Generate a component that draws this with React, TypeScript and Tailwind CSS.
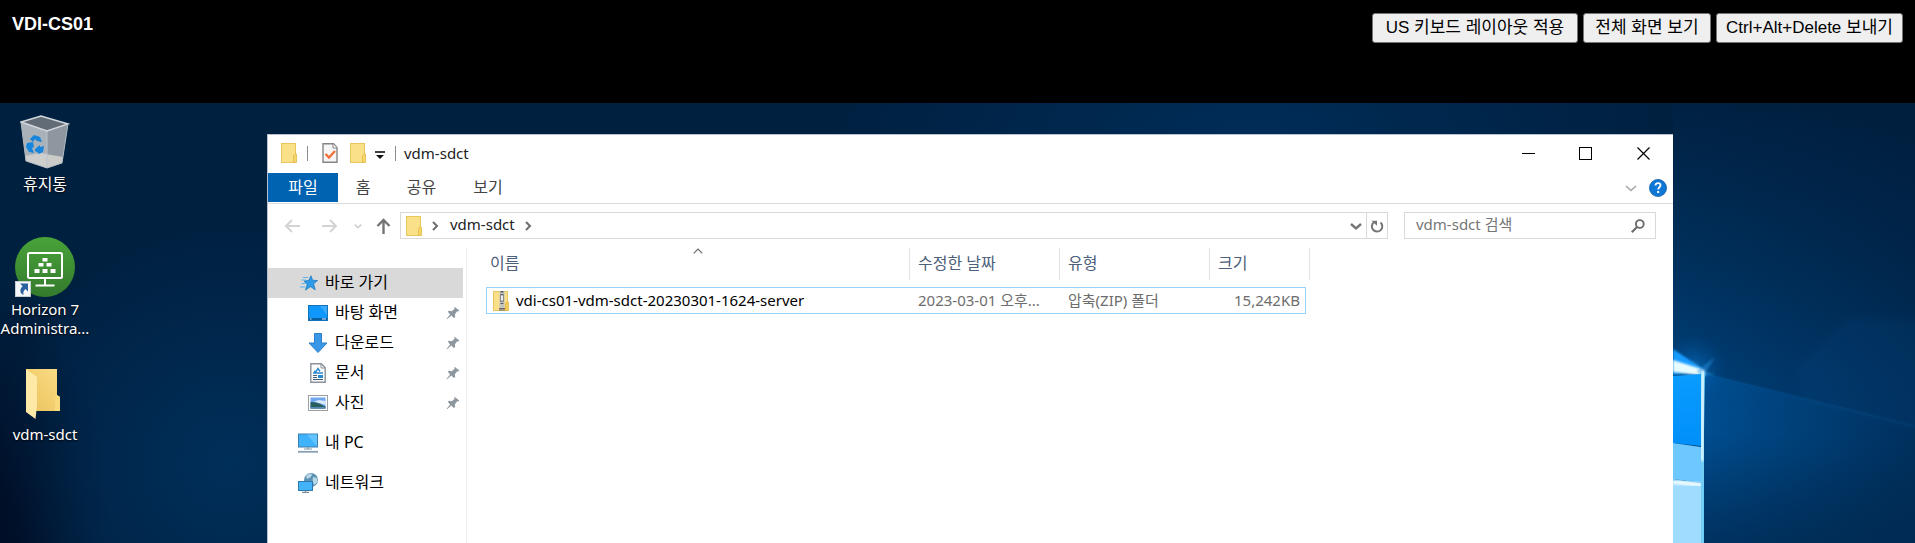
import type { ReactNode } from "react";

const UI = "font-['Noto_Sans','Noto_Sans_CJK_KR',sans-serif]";

function FolderIcon() {
  return (
    <svg width="16" height="20" viewBox="0 0 16 20" className="shrink-0" aria-hidden="true">
      <rect x="0.5" y="0.5" width="14" height="19" fill="#fbe08a" stroke="#e9c65c" />
      <path d="M12.5 19.5v-7l1.5-1.5h1.5v8.5z" fill="#f7d567" stroke="#dfb94a" strokeWidth="0.8" />
    </svg>
  );
}

function ZipIcon() {
  return (
    <svg width="16" height="20" viewBox="0 0 16 20" className="shrink-0" aria-hidden="true">
      <rect x="0.5" y="0.5" width="14" height="19" fill="#fbe08a" stroke="#e9c65c" />
      <path d="M12.5 19.5v-7l1.5-1.5h1.5v8.5z" fill="#f2cc55" stroke="#dfb94a" strokeWidth="0.8" />
      <rect x="6.5" y="0" width="5" height="19.5" fill="#c4c4be" />
      <path d="M9 0v13" stroke="#5b5b5b" strokeWidth="3" strokeDasharray="1.5 1.5" />
      <rect x="7.5" y="4" width="3" height="6" fill="#ececec" stroke="#7b7b7b" strokeWidth="0.8" />
      <path d="M6 17.5h6M6 19h6" stroke="#6d6a55" strokeWidth="1" />
    </svg>
  );
}

function PropertiesIcon() {
  return (
    <svg width="16" height="20" viewBox="0 0 16 20" aria-hidden="true">
      <path d="M1 .8h10.5L15 4.5V19.2H1z" fill="#f6f6f6" stroke="#858585" strokeWidth="1.4" />
      <path d="M11 1v4h4" fill="#fff" stroke="#858585" />
      <path d="M3.5 11l3.5 3.5 6-6.5" fill="none" stroke="#f1703a" strokeWidth="2.4" />
    </svg>
  );
}

function RecycleBinIcon() {
  return (
    <svg width="50" height="54" viewBox="0 0 50 54" aria-hidden="true">
      <path d="M1 7L27 16v37L6 46z" fill="#a9b1b9" />
      <path d="M48 9L27 16v37l15-5z" fill="#8e979f" />
      <path d="M1 7L21 1l27 8-21 7z" fill="#626c77" />
      <path d="M6 46l-1-5 15-3 23 4-1 6-15 5z" fill="#d2d1ce" opacity=".9" />
      <path d="M27 16v37" stroke="#bcc3c9" />
      <path d="M1 7L21 1l27 8-21 7z" fill="none" stroke="#d3d8dc" strokeWidth="1.4" />
      <path d="M1 7l5 39 21 7 15-5 6-39" fill="none" stroke="#b3bac1" strokeWidth="1" />
      <g fill="#1785dc">
        <path d="M10 24l4-4 6 2 2 5-5-1-2-2-2 3z" />
        <path d="M7 28l6-1 1 5-2 1 2 5-5-1-3-5z" />
        <path d="M15 34l5-4v2l4-1-1 6-4 2-2-2-2-1z" />
      </g>
    </svg>
  );
}

function HorizonIcon() {
  return (
    <svg width="62" height="62" viewBox="0 0 62 62" aria-hidden="true">
      <defs>
        <linearGradient id="horizon" x1="0" y1="0" x2="0" y2="1">
          <stop offset="0" stopColor="#48a339" />
          <stop offset="1" stopColor="#347a2d" />
        </linearGradient>
      </defs>
      <circle cx="31" cy="31" r="30" fill="url(#horizon)" />
      <rect x="14" y="17" width="34" height="25" rx="1.5" fill="none" stroke="#fff" strokeWidth="2" />
      <path d="M31 42v7M21.500 49.500h19" stroke="#fff" strokeWidth="2" fill="none" />
      <g fill="#fff">
        <rect x="28.500" y="22" width="5" height="3.500" />
        <rect x="24.500" y="27" width="5" height="3.500" />
        <rect x="32.500" y="27" width="5" height="3.500" />
        <rect x="20.500" y="33" width="5" height="4" />
        <rect x="28.500" y="33" width="5" height="4" />
        <rect x="36.500" y="33" width="5" height="4" />
      </g>
      <rect x="1.500" y="45.500" width="15" height="15" fill="#f4f6f8" stroke="#c9ced4" />
      <path d="M6 47.500h8v8l-2.500-2.500c-2 1.500-2.500 3-2 6-4-2-4-6-.8-8.800z" fill="#2c5f9e" />
    </svg>
  );
}

function OpenFolderIcon() {
  return (
    <svg width="40" height="52" viewBox="0 0 40 52" aria-hidden="true">
      <defs>
        <linearGradient id="folderBack" x1="0" y1="1" x2="1" y2="0">
          <stop offset="0" stopColor="#eac25a" />
          <stop offset="1" stopColor="#fbdc86" />
        </linearGradient>
      </defs>
      <path d="M1 1h31v26l3 2v14H1z" fill="url(#folderBack)" />
      <path d="M32 27l3 2v14h-5V30z" fill="#f8d97c" />
      <path d="M1 1l11 8v28l-1.500 14L1 44z" fill="#ffe9a6" />
    </svg>
  );
}

function PinIcon() {
  return (
    <svg width="14" height="14" viewBox="0 0 14 14" aria-hidden="true">
      <path d="M8.500 .8l4.800 3.600-1 1.200-1.100-.3-2.300 3 .3 2.600-1.300 1L5.300 9.600 1 13.200.6 12.800l3.500-4.400L1.800 5.800l1.200-1 2.700.4 3-2.500-.4-.9z" fill="#8d979f" />
    </svg>
  );
}

function StarIcon() {
  return (
    <svg width="18" height="16" viewBox="0 0 18 16" aria-hidden="true">
      <path d="M11 .8l1.500 4.400 5 .4-3.900 3.200 1.600 6-4.700-3.200L5.500 15l1.700-5.400L4 6l4.700-.4z" fill="#2d9be8" stroke="#1b79c4" strokeWidth=".8" />
      <path d="M3 2.500h5M1.500 5h4M1.500 8.500h4M0 12h5" stroke="#5fb3ea" strokeWidth="1.200" />
    </svg>
  );
}

function DesktopIcon() {
  return (
    <svg width="20" height="16" viewBox="0 0 20 16" aria-hidden="true">
      <rect x=".5" y=".5" width="19" height="15" fill="#0f97fb" stroke="#1373b8" />
      <path d="M12 1h7v9z" fill="#38abff" />
      <path d="M1 14h18" stroke="#0b5f9e" strokeWidth="2" />
      <path d="M2 14h1.500M14 14h4" stroke="#d4ecff" strokeWidth="1" />
    </svg>
  );
}

function DownloadIcon() {
  return (
    <svg width="20" height="20" viewBox="0 0 20 20" aria-hidden="true">
      <path d="M6.500.5h7v9.500h5.500L10 19.500 1 10h5.500z" fill="#3a97e6" stroke="#2c7fcb" />
    </svg>
  );
}

function DocumentIcon() {
  return (
    <svg width="16" height="20" viewBox="0 0 16 20" aria-hidden="true">
      <path d="M.8.8h10.500l3.900 4v14.400H.8z" fill="#fbfbfb" stroke="#8b9299" strokeWidth="1.400" />
      <path d="M11 1v4h4" fill="none" stroke="#8b9299" />
      <path d="M4 8.500h2l2-3 2 3M3 10h10" stroke="#2a8ad0" fill="none" strokeWidth="1.400" />
      <rect x="8" y="12" width="5" height="3" fill="#2a8ad0" />
      <path d="M3 12.500h4M3 14.500h4M3 16.500h10" stroke="#3e5e7a" />
    </svg>
  );
}

function PictureIcon() {
  return (
    <svg width="20" height="16" viewBox="0 0 20 16" aria-hidden="true">
      <rect x=".5" y=".5" width="19" height="15" fill="#fff" stroke="#9aa0a6" />
      <rect x="2.500" y="2.500" width="15" height="11" fill="#6fa6ee" />
      <path d="M6 6.500l5-1.500 6.500 1V10z" fill="#d7e8fb" />
      <path d="M2.500 7c4 0 7 .5 15 4.500v2h-15z" fill="#28605e" />
      <path d="M2.500 12h15v1.500h-15z" fill="#5588b3" />
    </svg>
  );
}

function ComputerIcon() {
  return (
    <svg width="20" height="20" viewBox="0 0 20 20" aria-hidden="true">
      <rect x=".5" y="1" width="19" height="13" fill="#3fb2fb" stroke="#3a7fae" />
      <path d="M9 1.500h10v12z" fill="#62c4ff" />
      <path d="M6 16h8M10 14v2" stroke="#8295a5" strokeWidth="1.200" />
      <path d="M0 18.800h20" stroke="#8aa0b3" strokeWidth="1.800" />
    </svg>
  );
}

function NetworkIcon() {
  return (
    <svg width="20" height="20" viewBox="0 0 20 20" aria-hidden="true">
      <circle cx="13" cy="7" r="7" fill="#5c93b4" />
      <path d="M8 3c2-2 4-2.500 6-2l-1 3-4 2zM15 4l4 1 .5 4-3 3-2-3z" fill="#b6d7e6" />
      <rect x=".5" y="8.500" width="14" height="9" fill="#43b3f9" stroke="#2f78ab" />
      <path d="M7.500 17.500v2M4 19.400h7" stroke="#7d909f" strokeWidth="1.200" />
    </svg>
  );
}

function Chevron({ d, size, color, width = 2 }: { d: string; size: number; color: string; width?: number }) {
  return (
    <svg width={size} height={size} viewBox="0 0 12 12" aria-hidden="true">
      <path d={d} fill="none" stroke={color} strokeWidth={width} />
    </svg>
  );
}

const DOWN = "M1 4l5 4.500 5-4.500";
const RIGHT = "M3 2l4 4-4 4";

function DesktopItem({ icon, label, className }: { icon: ReactNode; label: ReactNode; className: string }) {
  return (
    <button type="button" className={`flex w-[90px] flex-col items-center text-center text-white ${className}`}>
      {icon}
      <span className="whitespace-nowrap [text-shadow:0_1px_2px_#000]">{label}</span>
    </button>
  );
}

function NavItem({ icon, label, root, className = "" }: { icon: ReactNode; label: string; root?: boolean; className?: string }) {
  return (
    <li className={className}>
      <a href="#" className={`flex h-[30px] items-center pr-[3px] text-[16px] text-black ${root ? "pl-[30px]" : "pl-[40px]"}`}>
        <span className="flex w-5 justify-center">{icon}</span>
        <span className="ml-[7px] flex-1 pb-[2px]">{label}</span>
        {!root && <PinIcon />}
      </a>
    </li>
  );
}

function HeaderCell({ label, width, sorted, last }: { label: string; width: string; sorted?: boolean; last?: boolean }) {
  return (
    <th className={`p-0 pb-[7px] font-normal ${width}`}>
      <div className={`relative flex h-8 items-center border-r border-[#e2e2e2] pb-[2px] text-[16px] text-[#4c607a] ${sorted ? "pl-[4px]" : "pl-[8px]"} ${last ? "-mr-1" : ""}`}>
        {label}
        {sorted && (
          <span className="absolute top-0 left-1/2 -translate-x-1/2">
            <svg width="10" height="6" viewBox="0 0 10 6" aria-hidden="true">
              <path d="M.7 5.300L5 1l4.300 4.300" fill="none" stroke="#6b6b6b" strokeWidth="1.200" />
            </svg>
          </span>
        )}
      </div>
    </th>
  );
}

function Explorer() {
  return (
    <section className="mt-[31px] flex min-w-0 flex-1 flex-col border-t border-l border-[#b7c0cc] bg-white text-[15px]">
      <header className="flex h-[38px] items-center pb-[2px] pl-[13px]">
        <FolderIcon />
        <span className="ml-[10px] h-[15px] w-px bg-[#8c8c8c]" />
        <button type="button" aria-label="속성" className="ml-[14px]"><PropertiesIcon /></button>
        <button type="button" aria-label="새 폴더" className="ml-[12px]"><FolderIcon /></button>
        <button type="button" aria-label="빠른 실행 도구 모음 사용자 지정" className="ml-[9px] pt-[3px]">
          <svg width="10" height="10" viewBox="0 0 10 10" aria-hidden="true">
            <path d="M0 2h10" stroke="#111" strokeWidth="1.600" />
            <path d="M1 5h8L5 9z" fill="#111" />
          </svg>
        </button>
        <span className="ml-[10px] h-[15px] w-px bg-[#8c8c8c]" />
        <h2 className="ml-[8px] text-[#222]">vdm-sdct</h2>
        <div className="ml-auto flex items-center">
          <button type="button" aria-label="최소화" className="flex w-[57px] justify-center">
            <svg width="13" height="13" viewBox="0 0 13 13"><path d="M0 6.500h13" stroke="#000" /></svg>
          </button>
          <button type="button" aria-label="최대화" className="flex w-[57px] justify-center">
            <svg width="13" height="13" viewBox="0 0 13 13"><rect x=".5" y=".5" width="12" height="12" fill="none" stroke="#000" /></svg>
          </button>
          <button type="button" aria-label="닫기" className="flex w-[59px] justify-center">
            <svg width="13" height="13" viewBox="0 0 13 13"><path d="M.5.5l12 12M12.500.5l-12 12" stroke="#000" strokeWidth="1.200" /></svg>
          </button>
        </div>
      </header>

      <nav className="flex h-[31px] items-start border-b border-[#dadbdc] text-[16px] text-[#444]">
        <button type="button" className="h-[29px] w-[70px] bg-[#0063b1] pb-[2px] text-white">파일</button>
        <button type="button" className="h-[29px] w-[50px] pb-[2px]">홈</button>
        <button type="button" className="h-[29px] w-[67px] pb-[2px]">공유</button>
        <button type="button" className="h-[29px] w-[66px] pb-[2px]">보기</button>
        <div className="ml-auto flex h-[30px] items-center gap-[12px] pr-[6px]">
          <button type="button" aria-label="리본 확장"><Chevron d={DOWN} size={12} color="#a6a6a6" width={1.6} /></button>
          <button type="button" aria-label="도움말">
            <svg width="18" height="18" viewBox="0 0 18 18" aria-hidden="true">
              <circle cx="9" cy="9" r="8.500" fill="#0f78d6" stroke="#0a5ba8" strokeWidth=".8" />
              <path d="M6.500 6.500c0-3.200 5-3 5-.2 0 1.900-2.300 2-2.300 4.200" fill="none" stroke="#fff" strokeWidth="1.800" />
              <rect x="8.200" y="12" width="2" height="2" fill="#fff" />
            </svg>
          </button>
        </div>
      </nav>

      <div className="flex items-center pt-[8px] pr-[17px] pl-[16px]">
        <button type="button" aria-label="뒤로">
          <svg width="16" height="14" viewBox="0 0 16 14"><path d="M16 7H2M8 1L2 7l6 6" fill="none" stroke="#d3d3d3" strokeWidth="2" /></svg>
        </button>
        <button type="button" aria-label="앞으로" className="ml-[22px]">
          <svg width="16" height="14" viewBox="0 0 16 14"><path d="M0 7h14M8 1l6 6-6 6" fill="none" stroke="#d3d3d3" strokeWidth="2" /></svg>
        </button>
        <button type="button" aria-label="최근 위치" className="ml-[16px]"><Chevron d={DOWN} size={8} color="#d0d0d0" width={2.4} /></button>
        <button type="button" aria-label="위로" className="ml-[14px]">
          <svg width="15" height="16" viewBox="0 0 15 16"><path d="M7.500 16V2M1.500 8l6-6 6 6" fill="none" stroke="#757575" strokeWidth="2.400" /></svg>
        </button>
        <div className="ml-[9px] flex h-[27px] min-w-0 flex-1 items-center border border-[#d9d9d9] pl-[5px] text-[#222]">
          <FolderIcon />
          <span className="ml-[8px] flex"><Chevron d={RIGHT} size={12} color="#6d6d6d" /></span>
          <a href="#" className="ml-[8px] pb-[2px]">vdm-sdct</a>
          <span className="ml-[8px] flex"><Chevron d={RIGHT} size={12} color="#6d6d6d" /></span>
          <button type="button" aria-label="이전 위치" className="mr-[4px] ml-auto"><Chevron d={DOWN} size={12} color="#757575" width={2.4} /></button>
          <button type="button" aria-label="새로 고침" className="flex h-full w-[21px] items-center justify-center border-l border-[#d9d9d9]">
            <svg width="14" height="14" viewBox="0 0 14 14">
              <path d="M4 3.200A5.200 5.200 0 1 0 10.500 3.500" fill="none" stroke="#757575" strokeWidth="2" />
              <path d="M1.500 1.800h5.500v5z" fill="#757575" />
            </svg>
          </button>
        </div>
        <form className="ml-[16px] flex h-[27px] w-[252px] items-center border border-[#d9d9d9] pr-[10px] pl-[11px]">
          <input aria-label="vdm-sdct 검색" placeholder="vdm-sdct 검색" className="min-w-0 flex-1 bg-transparent pb-[2px] outline-none placeholder:text-[#767676]" />
          <svg width="14" height="14" viewBox="0 0 14 14" aria-hidden="true">
            <circle cx="8.800" cy="5" r="3.900" fill="none" stroke="#6d6d6d" strokeWidth="1.900" />
            <path d="M6 8L.8 13.200" stroke="#6d6d6d" strokeWidth="2.200" />
          </svg>
        </form>
      </div>

      <div className="mt-[9px] flex flex-1">
        <aside className="w-[199px] shrink-0 border-r border-[#f0f0f0] pt-[20px] pr-[3px]">
          <ul>
            <li className="bg-[#d9d9d9]">
              <a href="#" className="flex h-[30px] items-center pl-[32px] text-[16px] text-black">
                <StarIcon />
                <span className="ml-[7px] pb-[2px]">바로 가기</span>
              </a>
            </li>
            <NavItem icon={<DesktopIcon />} label="바탕 화면" />
            <NavItem icon={<DownloadIcon />} label="다운로드" />
            <NavItem icon={<DocumentIcon />} label="문서" />
            <NavItem icon={<PictureIcon />} label="사진" />
            <NavItem root icon={<ComputerIcon />} label="내 PC" className="mt-[10px]" />
            <NavItem root icon={<NetworkIcon />} label="네트워크" className="mt-[10px]" />
          </ul>
        </aside>
        <div className="min-w-0 flex-1 pl-[19px]">
          <table className="w-[820px] table-fixed border-separate border-spacing-0 text-left">
            <thead>
              <tr>
                <HeaderCell label="이름" width="w-[424px]" sorted />
                <HeaderCell label="수정한 날짜" width="w-[150px]" />
                <HeaderCell label="유형" width="w-[150px]" />
                <HeaderCell label="크기" width="w-[96px]" last />
              </tr>
            </thead>
            <tbody>
              <tr className="text-[#6d6d6d]">
                <td className="h-[27px] border-y border-l border-[#99d1ff] p-0 pl-[6px] text-black">
                  <span className="flex items-center gap-[7px] leading-[20px]">
                    <ZipIcon />
                    <span className="pb-[2px]">vdi-cs01-vdm-sdct-20230301-1624-server</span>
                  </span>
                </td>
                <td className="border-y border-[#99d1ff] p-0 pb-[2px] pl-[8px] leading-[20px] whitespace-nowrap">2023-03-01 오후...</td>
                <td className="border-y border-[#99d1ff] p-0 pb-[2px] pl-[8px] leading-[20px] whitespace-nowrap">압축(ZIP) 폴더</td>
                <td className="border-y border-r border-[#99d1ff] p-0 pr-[5px] pb-[2px] text-right leading-[20px]">15,242KB</td>
              </tr>
            </tbody>
          </table>
        </div>
      </div>
    </section>
  );
}

function LightBeam() {
  return (
    <svg className="h-full w-full" viewBox="0 0 242 440" preserveAspectRatio="xMinYMin slice" aria-hidden="true">
      <defs>
        <linearGradient id="sky" x1="0" y1="0" x2="0" y2="1">
          <stop offset="0" stopColor="#002142" />
          <stop offset=".35" stopColor="#00305c" />
          <stop offset=".62" stopColor="#003f77" />
          <stop offset=".8" stopColor="#00427d" />
          <stop offset="1" stopColor="#003260" />
        </linearGradient>
        <linearGradient id="shade" x1="0" y1="0" x2="1" y2="0">
          <stop offset="0" stopColor="#001a38" stopOpacity="0" />
          <stop offset="1" stopColor="#001a38" stopOpacity=".5" />
        </linearGradient>
        <linearGradient id="beam" x1="0" y1="0" x2="1" y2=".2">
          <stop offset="0" stopColor="#005aa6" stopOpacity=".6" />
          <stop offset="1" stopColor="#004680" stopOpacity=".1" />
        </linearGradient>
        <linearGradient id="fade" x1="0" y1="0" x2="0" y2="1">
          <stop offset="0" stopColor="#002b54" stopOpacity="0" />
          <stop offset="1" stopColor="#002b54" stopOpacity=".7" />
        </linearGradient>
        <radialGradient id="glow">
          <stop offset="0" stopColor="#7fd4ff" />
          <stop offset=".25" stopColor="#0a7fdc" stopOpacity=".7" />
          <stop offset="1" stopColor="#0058a8" stopOpacity="0" />
        </radialGradient>
        <linearGradient id="pane" x1="0" y1="0" x2="0" y2="1">
          <stop offset="0" stopColor="#0a9cff" />
          <stop offset="1" stopColor="#008ffa" />
        </linearGradient>
        <filter id="soft"><feGaussianBlur stdDeviation="1.200" /></filter>
        <filter id="haze"><feGaussianBlur stdDeviation="4" /></filter>
      </defs>
      <rect width="242" height="440" fill="url(#sky)" />
      <rect width="242" height="440" fill="url(#shade)" />
      <path d="M30 270L242 323V440H30z" fill="url(#beam)" />
      <path d="M30 270L242 323" stroke="#1060a4" strokeWidth="1.500" opacity=".3" filter="url(#soft)" />
      <path d="M128 298l-3-35 55-50 72 5v110z" fill="#0a5090" opacity=".14" filter="url(#haze)" />
      <rect x="30" y="330" width="212" height="110" fill="url(#fade)" />
      <circle cx="20" cy="265" r="34" fill="url(#glow)" opacity=".5" />
      <path d="M0 246l30 20-30 6z" fill="#189bff" filter="url(#soft)" />
      <path d="M0 257l32 10v6L0 269z" fill="#e8fbff" filter="url(#soft)" />
      <path d="M24 268l18-14-9 15 10 2-14 2z" fill="#2590e0" opacity=".5" filter="url(#soft)" />
      <path d="M0 273l28-2v72L0 340z" fill="url(#pane)" />
      <path d="M0 340l28 4v36L0 376z" fill="#6cc8ff" />
      <path d="M0 376l28 4v60H0z" fill="#a0dcff" />
      <path d="M0 379l28 3" stroke="#f0fbff" strokeWidth="4" filter="url(#soft)" />
      <path d="M28 269h4l-1 60v111h-3z" fill="#72cdf5" />
      <path d="M30 268l-1 90" stroke="#e6fbff" strokeWidth="3" filter="url(#soft)" />
    </svg>
  );
}

export default function App() {
  return (
    <div className={`flex min-h-screen flex-col bg-black ${UI}`}>
      <header className="flex h-[103px] shrink-0 items-start justify-between px-[12px] pt-[13px] font-['Liberation_Sans','Noto_Sans_CJK_KR',sans-serif]">
        <h1 className="text-[18px] leading-[22px] font-bold text-white">VDI-CS01</h1>
        <div className="flex gap-[5px] text-[17px] leading-[28px] text-black">
          <button type="button" className="h-[30px] min-w-[206px] rounded-[3px] border border-[#767676] bg-[#efefef] px-[7px]">US 키보드 레이아웃 적용</button>
          <button type="button" className="h-[30px] min-w-[128px] rounded-[3px] border border-[#767676] bg-[#efefef] px-[7px]">전체 화면 보기</button>
          <button type="button" className="h-[30px] min-w-[187px] rounded-[3px] border border-[#767676] bg-[#efefef] px-[7px]">Ctrl+Alt+Delete 보내기</button>
        </div>
      </header>
      <main className="flex flex-1 bg-[#002040] bg-[radial-gradient(ellipse_420px_200px_at_1250px_40px,#002d58_0%,transparent_100%),radial-gradient(circle_at_230px_360px,#002f5a_0%,transparent_240px),radial-gradient(ellipse_110px_260px_at_0px_440px,#000e26_20%,transparent_100%)]">
        <div className="flex w-[267px] shrink-0 flex-col items-start text-[15px] leading-[19px]">
          <DesktopItem className="mt-[12px] gap-[6px] text-[16px]" icon={<RecycleBinIcon />} label="휴지통" />
          <DesktopItem className="mt-[42px] gap-[2px]" icon={<HorizonIcon />} label={<>Horizon 7<br />Administra...</>} />
          <DesktopItem className="mt-[30px] gap-[5px]" icon={<OpenFolderIcon />} label="vdm-sdct" />
        </div>
        <Explorer />
        <div className="flex w-[242px] shrink-0">
          <LightBeam />
        </div>
      </main>
    </div>
  );
}
